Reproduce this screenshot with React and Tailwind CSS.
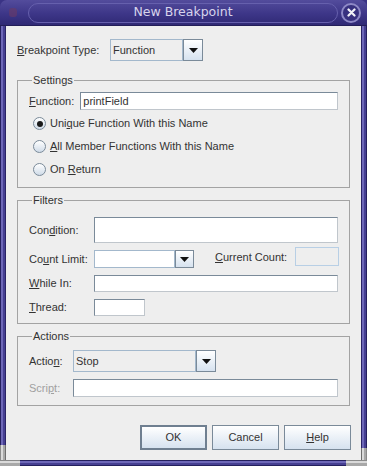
import React from "react";

const M = ({ children }) => <span className="underline underline-offset-[1px]">{children}</span>;

const Arrow = () => (
  <svg width="9" height="5" viewBox="0 0 9 5">
    <polygon points="0,0 9,0 4.5,5" fill="#111" />
  </svg>
);

const Combo = ({ value, width, btn = 20, height, white }) => (
  <div className={`flex ${width} ${height}`}>
    <div
      className={`flex flex-1 items-center border border-[#a3b8cc] pl-[2px] ${
        white ? "bg-white" : "bg-[#eeeeee]"
      }`}
    >
      {value}
    </div>
    <div
      className="grid place-items-center border border-[#7a8a99] bg-[linear-gradient(to_bottom,#ffffff,#d6e2ef)]"
      style={{ width: btn }}
    >
      <Arrow />
    </div>
  </div>
);

const Field = ({ className = "", value }) => (
  <div
    className={`flex items-center border border-t-[#7a8a99] border-l-[#7a8a99] border-b-[#c0c6cc] border-r-[#c0c6cc] bg-white pl-[2px] ${className}`}
  >
    {value}
  </div>
);

const Radio = ({ checked, children }) => (
  <div className="flex h-[23px] items-center">
    <div className="ml-[4px] grid h-[13px] w-[13px] place-items-center rounded-full border border-[#7a8a99] bg-[linear-gradient(to_bottom,#ffffff,#cfdbe8)]">
      {checked && <div className="h-[6px] w-[6px] rounded-full bg-[#1a1a1a]" />}
    </div>
    <span className="ml-[4px]">{children}</span>
  </div>
);

const Group = ({ title, className = "", children }) => (
  <fieldset className={`ml-[11px] mr-[11px] border border-[#a3a3a3] px-[11px] ${className}`}>
    <legend className="ml-[3px] px-[1px] leading-[14px]">{title}</legend>
    {children}
  </fieldset>
);

const Button = ({ children, primary }) => (
  <button
    className={`h-[25px] w-[67px] bg-[linear-gradient(to_bottom,#ffffff,#d6e2ef)] ${
      primary ? "border-2 border-[#6f7f90]" : "border border-[#7a8a99]"
    }`}
  >
    {children}
  </button>
);

export default function App() {
  return (
    <div className="flex h-[466px] w-[367px] flex-col bg-[#3a3385] font-['Liberation_Sans',Arial,sans-serif] text-[11px] text-[#333333]">
      {/* title bar */}
      <div className="flex h-[26px] items-center rounded-t-[7px] border-b border-[#231e58] bg-[linear-gradient(to_bottom,#534c9c,#3d3688_55%,#2f2974)] pl-[9px] pr-[6px]">
        <div className="h-[9px] w-[8px] rounded-[3px] bg-[#6a3a66] opacity-60" />
        <div className="ml-[11px] flex h-[20px] flex-1 items-center justify-center rounded-full border border-[#6660ad] font-['DejaVu_Sans',sans-serif] text-[12.5px] text-[#d7d4ec]">
          New Breakpoint
        </div>
        <div className="ml-[3px] grid h-[20px] w-[20px] place-items-center rounded-full border-2 border-[#8e89c6] bg-[#37307f]">
          <svg width="9" height="9" viewBox="0 0 9 9">
            <path d="M1.5 1.5 L7.5 7.5 M7.5 1.5 L1.5 7.5" stroke="#f2f2f8" strokeWidth="2.2" strokeLinecap="round" />
          </svg>
        </div>
      </div>

      <div className="flex flex-1">
        <div className="flex w-[6px] flex-col">
          <div className="flex-1 bg-[linear-gradient(to_right,#25205e_1px,#6e68b8_1px,#6e68b8_3px,#463f92_3px,#463f92_5px,#2a2466_5px)]" />
          <div className="h-[15px] bg-[linear-gradient(to_right,#8a8a8a_1px,#dadada_1px,#dadada_3px,#a8a8a8_3px,#a8a8a8_5px,#6e6e6e_5px)]" />
        </div>

        {/* dialog body */}
        <div className="flex w-[355px] flex-col bg-[#eeeeee]">
          <div className="mt-[13px] flex items-center pl-[11px]">
            <span className="w-[93px]">
              <M>B</M>reakpoint Type:
            </span>
            <Combo value="Function" width="w-[93px]" height="h-[22px]" />
          </div>

          <Group title="Settings" className="mt-[12px] pb-[6px]">
            <div className="mt-[5px] flex h-[18px] items-center">
              <span>
                <M>F</M>unction:
              </span>
              <Field className="ml-[6px] h-[18px] flex-1" value="printField" />
            </div>
            <div className="mt-[2px]">
              <Radio checked>
                Uni<M>q</M>ue Function With this Name
              </Radio>
              <Radio>
                <M>A</M>ll Member Functions With this Name
              </Radio>
              <Radio>
                On <M>R</M>eturn
              </Radio>
            </div>
          </Group>

          <Group title="Filters" className="mt-[5px] pb-[7px]">
            <div className="mt-[10px] flex h-[26px] items-center">
              <span className="w-[65px]">
                Con<M>d</M>ition:
              </span>
              <Field className="h-[26px] flex-1" />
            </div>
            <div className="mt-[4px] flex h-[21px] items-start">
              <span className="mt-[3px] w-[65px] leading-[18px]">
                Co<M>u</M>nt Limit:
              </span>
              <div className="mt-[3px]">
                <Combo value="" width="w-[100px]" btn={19} height="h-[18px]" white />
              </div>
              <span className="ml-[21px] mt-[1px] leading-[18px]">
                <M>C</M>urrent Count:
              </span>
              <div className="ml-auto mr-[-1px] h-[19px] w-[44px] border border-[#b8cfe5] bg-[#eeeeee]" />
            </div>
            <div className="mt-[7px] flex h-[17px] items-center">
              <span className="w-[65px]">
                <M>W</M>hile In:
              </span>
              <Field className="h-[17px] flex-1" />
            </div>
            <div className="mt-[7px] flex h-[17px] items-center">
              <span className="w-[65px]">
                <M>T</M>hread:
              </span>
              <Field className="h-[17px] w-[51px]" />
            </div>
          </Group>

          <Group title="Actions" className="mt-[5px] pb-[8px]">
            <div className="mt-[7px] flex h-[22px] items-center">
              <span className="w-[44px]">
                Actio<M>n</M>:
              </span>
              <Combo value="Stop" width="w-[143px]" height="h-[22px]" />
            </div>
            <div className="mt-[7px] flex h-[18px] items-center">
              <span className="w-[44px] text-[#a0a0a0]">
                Scri<M>p</M>t:
              </span>
              <Field className="h-[18px] flex-1" />
            </div>
          </Group>

          <div className="mt-[19px] flex justify-end gap-[5px] pr-[10px]">
            <Button primary>OK</Button>
            <Button>Cancel</Button>
            <Button>
              <M>H</M>elp
            </Button>
          </div>
        </div>

        <div className="flex w-[6px] flex-col">
          <div className="flex-1 bg-[linear-gradient(to_right,#2a2466_1px,#6e68b8_1px,#6e68b8_3px,#463f92_3px,#463f92_5px,#25205e_5px)]" />
          <div className="h-[12px] bg-[linear-gradient(to_right,#6e6e6e_1px,#dadada_1px,#dadada_3px,#a8a8a8_3px,#a8a8a8_5px,#8a8a8a_5px)]" />
        </div>
      </div>

      <div className="flex h-[6px]">
        <div className="w-[20px] bg-[linear-gradient(to_bottom,#8a8a8a_1px,#dadada_1px,#dadada_3px,#a8a8a8_3px)]" />
        <div className="flex-1 bg-[linear-gradient(to_bottom,#25205e_1px,#6e68b8_1px,#6e68b8_3px,#463f92_3px,#463f92_5px,#25205e_5px)]" />
        <div className="w-[21px] bg-[linear-gradient(to_bottom,#8a8a8a_1px,#dadada_1px,#dadada_3px,#a8a8a8_3px)]" />
      </div>
    </div>
  );
}
